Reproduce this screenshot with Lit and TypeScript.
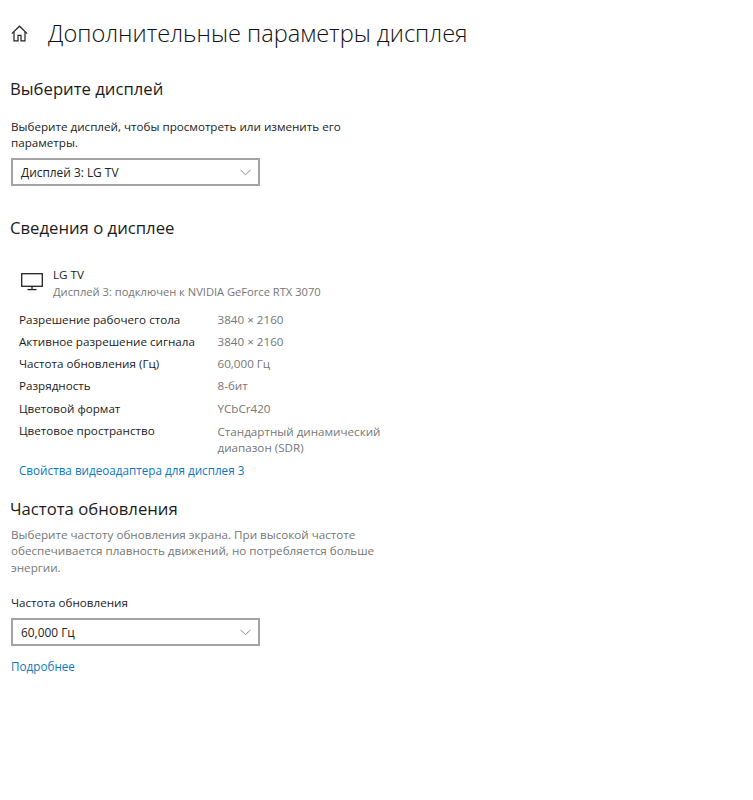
import {LitElement, html, css} from 'lit';
import {customElement} from 'lit/decorators.js';

interface InfoRow {
    label: string;
    value: string[];
}

const rows: InfoRow[] = [
    {label: 'Разрешение рабочего стола', value: ['3840 × 2160']},
    {label: 'Активное разрешение сигнала', value: ['3840 × 2160']},
    {label: 'Частота обновления (Гц)', value: ['60,000 Гц']},
    {label: 'Разрядность', value: ['8-бит']},
    {label: 'Цветовой формат', value: ['YCbCr420']},
    {label: 'Цветовое пространство', value: ['Стандартный динамический', 'диапазон (SDR)']},
];

@customElement('app-root')
export class AppRoot extends LitElement {
    static styles = css`
        :host {
            display: block;
            height: 800px;
            background: #fff;
            color: #1a1a1a;
            font-family: "Open Sans", "Noto Sans", sans-serif;
            font-size: 11.65px;
            line-height: 16px;
            overflow: hidden;
        }

        .page {
            padding: 16px 0 0 11px;
        }

        .header {
            display: flex;
            align-items: center;
            height: 34px;
            gap: 20px;
        }

        .home {
            display: block;
            width: 17px;
            height: 17px;
            color: #222;
        }

        h1 {
            margin: 0;
            font-size: 23.6px;
            line-height: 34px;
            font-weight: 300;
            color: #111;
        }

        h2 {
            margin: 0 0 0 -1px;
            font-size: 16.7px;
            line-height: 24px;
            font-weight: 400;
            color: #1c1c1c;
        }

        .choose {
            margin-top: 27px;
        }

        .choose p {
            margin: 18px 0 7px;
            width: 345px;
        }

        .select {
            box-sizing: border-box;
            display: flex;
            align-items: center;
            justify-content: space-between;
            width: 249px;
            height: 28px;
            padding: 0 7px 0 8px;
            border: 2px solid #a3a3a3;
            font-size: 11.9px;
            color: #222;
        }

        .chevron {
            display: block;
            width: 11px;
            height: 7px;
            color: #8a8a8a;
        }

        .info {
            margin-top: 30px;
        }

        .monitor {
            display: flex;
            align-items: flex-start;
            margin: 27px 0 0 10px;
        }

        .monitor svg {
            display: block;
            width: 22px;
            height: 18px;
            margin: 6px 10px 0 0;
            color: #222;
        }

        .monitor .sub {
            margin-top: 1px;
            font-size: 11.15px;
            color: #767676;
        }

        .rows {
            display: grid;
            grid-template-columns: 198.5px 1fr;
            row-gap: 6.13px;
            margin: 12px 0 0 8px;
        }

        .rows .value {
            color: #767676;
        }

        .rows .value.wrapped {
            padding-top: 1px;
        }

        a {
            color: #0a78c2;
            font-size: 11.7px;
            text-decoration: none;
        }

        .adapter {
            display: block;
            margin: 6px 0 0 8px;
        }

        .refresh {
            margin-top: 19px;
        }

        .refresh p {
            margin: 6px 0 0;
            width: 370px;
            color: #767676;
            line-height: 16.5px;
        }

        .refresh .field {
            margin: 19px 0 7px;
        }

        .more {
            display: block;
            margin-top: 12px;
        }
    `;

    renderSelect(value: string) {
        return html`
            <div class="select">
                <span>${value}</span>
                <svg class="chevron" viewBox="0 0 11 7" fill="none" stroke="currentColor" stroke-width="1">
                    <path d="M0.5 0.8 L5.5 5.8 L10.5 0.8"/>
                </svg>
            </div>
        `;
    }

    render() {
        return html`
            <div class="page">
                <div class="header">
                    <svg class="home" viewBox="0 0 17 17" fill="none" stroke="currentColor" stroke-width="1.2">
                        <path d="M0.8 8.6 L8.5 1.2 L16.2 8.6"/>
                        <path d="M3 7 V15.8 H7 V10.4 H10 V15.8 H14 V7"/>
                    </svg>
                    <h1>Дополнительные параметры дисплея</h1>
                </div>

                <section class="choose">
                    <h2>Выберите дисплей</h2>
                    <p>Выберите дисплей, чтобы просмотреть или изменить его параметры.</p>
                    ${this.renderSelect('Дисплей 3: LG TV')}
                </section>

                <section class="info">
                    <h2>Сведения о дисплее</h2>
                    <div class="monitor">
                        <svg viewBox="0 0 22 18" fill="none" stroke="currentColor" stroke-width="1.3">
                            <rect x="0.7" y="0.7" width="20.6" height="12.6"/>
                            <path d="M11 13.5 V16.5 M6.5 16.6 H15.5"/>
                        </svg>
                        <div>
                            <div>LG TV</div>
                            <div class="sub">Дисплей 3: подключен к NVIDIA GeForce RTX 3070</div>
                        </div>
                    </div>
                    <div class="rows">
                        ${rows.map(row => html`
                            <div>${row.label}</div>
                            <div class="value ${row.value.length > 1 ? 'wrapped' : ''}">
                                ${row.value.map(line => html`<div>${line}</div>`)}
                            </div>
                        `)}
                    </div>
                    <a class="adapter" href="#">Свойства видеоадаптера для дисплея 3</a>
                </section>

                <section class="refresh">
                    <h2>Частота обновления</h2>
                    <p>Выберите частоту обновления экрана. При высокой частоте обеспечивается плавность движений, но потребляется больше энергии.</p>
                    <div class="field">Частота обновления</div>
                    ${this.renderSelect('60,000 Гц')}
                    <a class="more" href="#">Подробнее</a>
                </section>
            </div>
        `;
    }
}
